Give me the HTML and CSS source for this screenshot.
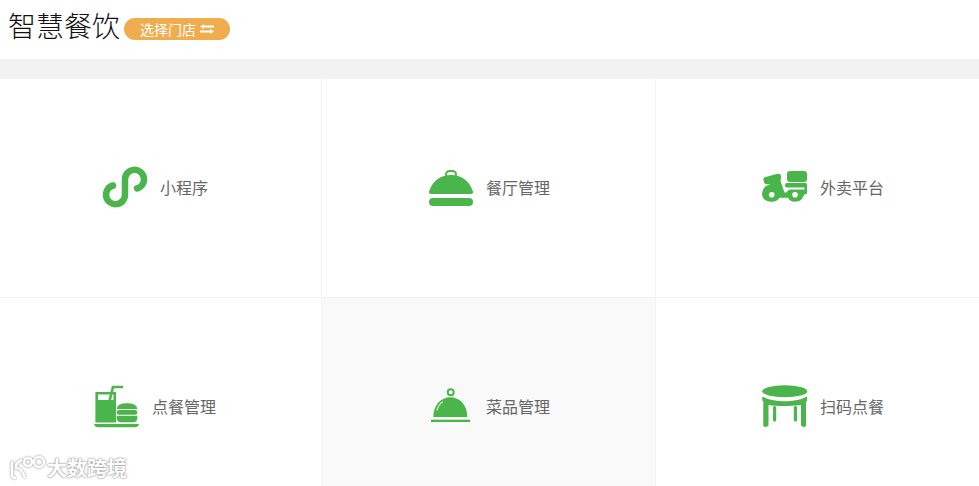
FILE: index.html
```html
<!DOCTYPE html>
<html lang="en">
<head>
	<meta charset="UTF-8">
	<title>智慧餐饮</title>
	<link rel="stylesheet" href="styles.css">
</head>
<body>
	<header class="top">
		<h1 class="title">智慧餐饮</h1>
		<a class="store-btn">选择门店
			<svg class="swap" viewBox="0 0 14 10"><path d="M4 0 0 2.500 4 5V3.400h10V1.600H4zM10 5l4 2.500L10 10V8.400H0V6.600h10z"/></svg>
		</a>
	</header>
	<div class="band"></div>

	<main class="grid">
		<a class="cell pad-a">
			<svg class="icon" viewBox="0 0 46 46"><path class="line" d="M11 20.500A9.500 9.500 0 1 0 23 29.500V14.500A9.500 9.500 0 1 1 35 23.500"/></svg>
			<span>小程序</span>
		</a>
		<a class="cell pad-b">
			<svg class="icon" viewBox="0 0 46 46">
				<path d="M2 29H42a2 2 0 0 0 2-2.500C40 15 32 10 22 10S4 15 0 26.500A2 2 0 0 0 2 29z"/>
				<rect class="ring" x="17" y="6" width="10" height="7" rx="3.500"/>
				<rect x="0" y="33" width="44" height="8" rx="4"/>
			</svg>
			<span>餐厅管理</span>
		</a>
		<a class="cell pad-c">
			<svg class="icon" viewBox="0 0 46 46">
				<rect x="26" y="6" width="20" height="11" rx="3"/>
				<path d="M26 18H44.500Q46 18 46 19.500V25H43.500V22.500H26Q24 22.500 24 20.200 24 18 26 18z"/>
				<path d="M3 12.500 16.500 8.800Q20.500 8.500 20 12.500L19.500 16 23.500 27.500H25.500Q27 24.500 30 24.500H46V28.500Q42.500 29.500 42.300 31 41 36.700 34 36.700 29 36.500 27 32.700H18.500Q16 36.700 10.700 36.700 2 36.500 1 29.500 1.500 22.500 6 20.500L9.500 19.500 4 19Q1.500 15 3 12.500z"/>
				<circle class="hole" cx="10.700" cy="29.800" r="2.800"/>
				<circle class="hole" cx="34" cy="29.800" r="2.800"/>
			</svg>
			<span>外卖平台</span>
		</a>
		<a class="cell pad-d">
			<svg class="icon" viewBox="0 0 46 46">
				<path class="thin" d="M15.500 17 19 3H29"/>
				<path class="thin" d="M2.700 9.300H20.700V37.300H2.700z"/>
				<path d="M3 16H20.500V38H3z"/>
				<path d="M22.700 25Q23 19.300 33 19.300T43.300 25z"/>
				<rect x="22.700" y="26" width="20.600" height="4.700" rx="2.300"/>
				<path d="M22.700 31.700H43.300V34Q43 38.300 39 38.300H27Q23 38.300 22.700 34z"/>
				<path d="M0 40H45Q44 43.300 41 43.300H4Q1 43.300 0 40z"/>
			</svg>
			<span>点餐管理</span>
		</a>
		<a class="cell pad-b is-active">
			<svg class="icon" viewBox="0 0 46 46">
				<circle class="ring" cx="21.700" cy="8.300" r="3"/>
				<path d="M4.300 33C4.300 21 12 13.300 21.300 13.300S38.300 21 38.300 33z"/>
				<path class="shine" d="M8 26Q9.500 20.500 13.500 18"/>
				<rect x="2" y="35.700" width="39" height="2.300"/>
			</svg>
			<span>菜品管理</span>
		</a>
		<a class="cell pad-c">
			<svg class="icon" viewBox="0 0 46 46">
				<ellipse cx="23.700" cy="7.300" rx="22.500" ry="6"/>
				<path d="M1.300 12.500Q10 17.300 23.700 17.300T46 12.500V16.500Q44.500 18 45 19V42Q42.500 44 40 41.500V21Q30 22 23.700 22 13 22 7.500 21V41.500Q5 44 2.300 42V19Q3 17.500 1.300 16.500z"/>
				<rect x="12" y="22" width="3.200" height="15.500" rx="1.500"/>
				<rect x="32.800" y="22" width="3.200" height="15.500" rx="1.500"/>
			</svg>
			<span>扫码点餐</span>
		</a>
	</main>

	<div class="watermark">
		<svg class="mark" viewBox="0 0 38 26">
			<path d="M4 6V19Q4 23 8 23M14 5Q7 8 8 13 14 13 17 23"/>
			<circle cx="20" cy="7" r="4"/>
			<circle cx="31" cy="7" r="5"/>
		</svg>
		<span>大数跨境</span>
	</div>
</body>
</html>
```

FILE: styles.css
```css
* {
	box-sizing: border-box;
}
html,
body {
	margin: 0;
	height: 100%;
	overflow: hidden;
	background: #fff;
	font: 16px 'Noto Sans CJK SC', 'Noto Sans', sans-serif;
	color: #666;
}

.top {
	display: flex;
	align-items: center;
	height: 59px;
	padding: 0 0 10px 8px;
}
.title {
	margin: 0;
	font-size: 28px;
	font-weight: 300;
	line-height: 40px;
	color: #111;
}
.store-btn {
	display: flex;
	align-items: center;
	justify-content: center;
	gap: 4px;
	width: 106px;
	height: 22px;
	margin: 8px 0 0 4px;
	border-radius: 11px;
	background: #f0ad4e;
	color: #fff;
	font-size: 14px;
	white-space: nowrap;
}
.swap {
	width: 14px;
	height: 10px;
	fill: #fff;
}

.band {
	height: 20px;
	background: #f2f2f2;
}

.grid {
	display: grid;
	grid-template-columns: 322px 334px 1fr;
	grid-auto-rows: 219px;
	height: 407px;
	overflow: hidden;
}
.cell {
	display: flex;
	align-items: center;
	gap: 12px;
	border-right: 1px solid #f2f2f2;
	border-bottom: 1px solid #f2f2f2;
}
.cell:nth-child(3n) {
	border-right: 0;
}
.cell span {
	margin-bottom: 2px;
}
.cell.is-active {
	background: #f9f9f9;
}
.pad-a { padding-left: 102px; }
.pad-b { padding-left: 107px; gap: 11px; }
.pad-c { padding-left: 105px; gap: 13px; }
.pad-d { padding-left: 94px; }

.icon {
	flex: none;
	width: 46px;
	height: 46px;
	fill: #4ab54a;
}
.icon .line {
	fill: none;
	stroke: #4ab54a;
	stroke-width: 6.500;
	stroke-linecap: round;
}
.icon .thin {
	fill: none;
	stroke: #4ab54a;
	stroke-width: 2.600;
}
.icon .ring {
	fill: none;
	stroke: #4ab54a;
	stroke-width: 2;
}
.icon .hole {
	fill: #fff;
}
.icon .shine {
	fill: none;
	stroke: #d5efd5;
	stroke-width: 1.200;
	stroke-linecap: round;
}

.watermark {
	position: absolute;
	left: 8px;
	top: 455px;
	display: flex;
	align-items: center;
	gap: 1px;
	color: #fff;
	font-size: 20px;
	line-height: 26px;
	font-weight: 700;
	text-shadow: 0 0 2px #999, 0 0 2px #999;
}
.mark {
	width: 38px;
	height: 26px;
	fill: none;
	stroke: #fff;
	stroke-width: 2.500;
	filter: drop-shadow(0 0 1px #888);
}
```
